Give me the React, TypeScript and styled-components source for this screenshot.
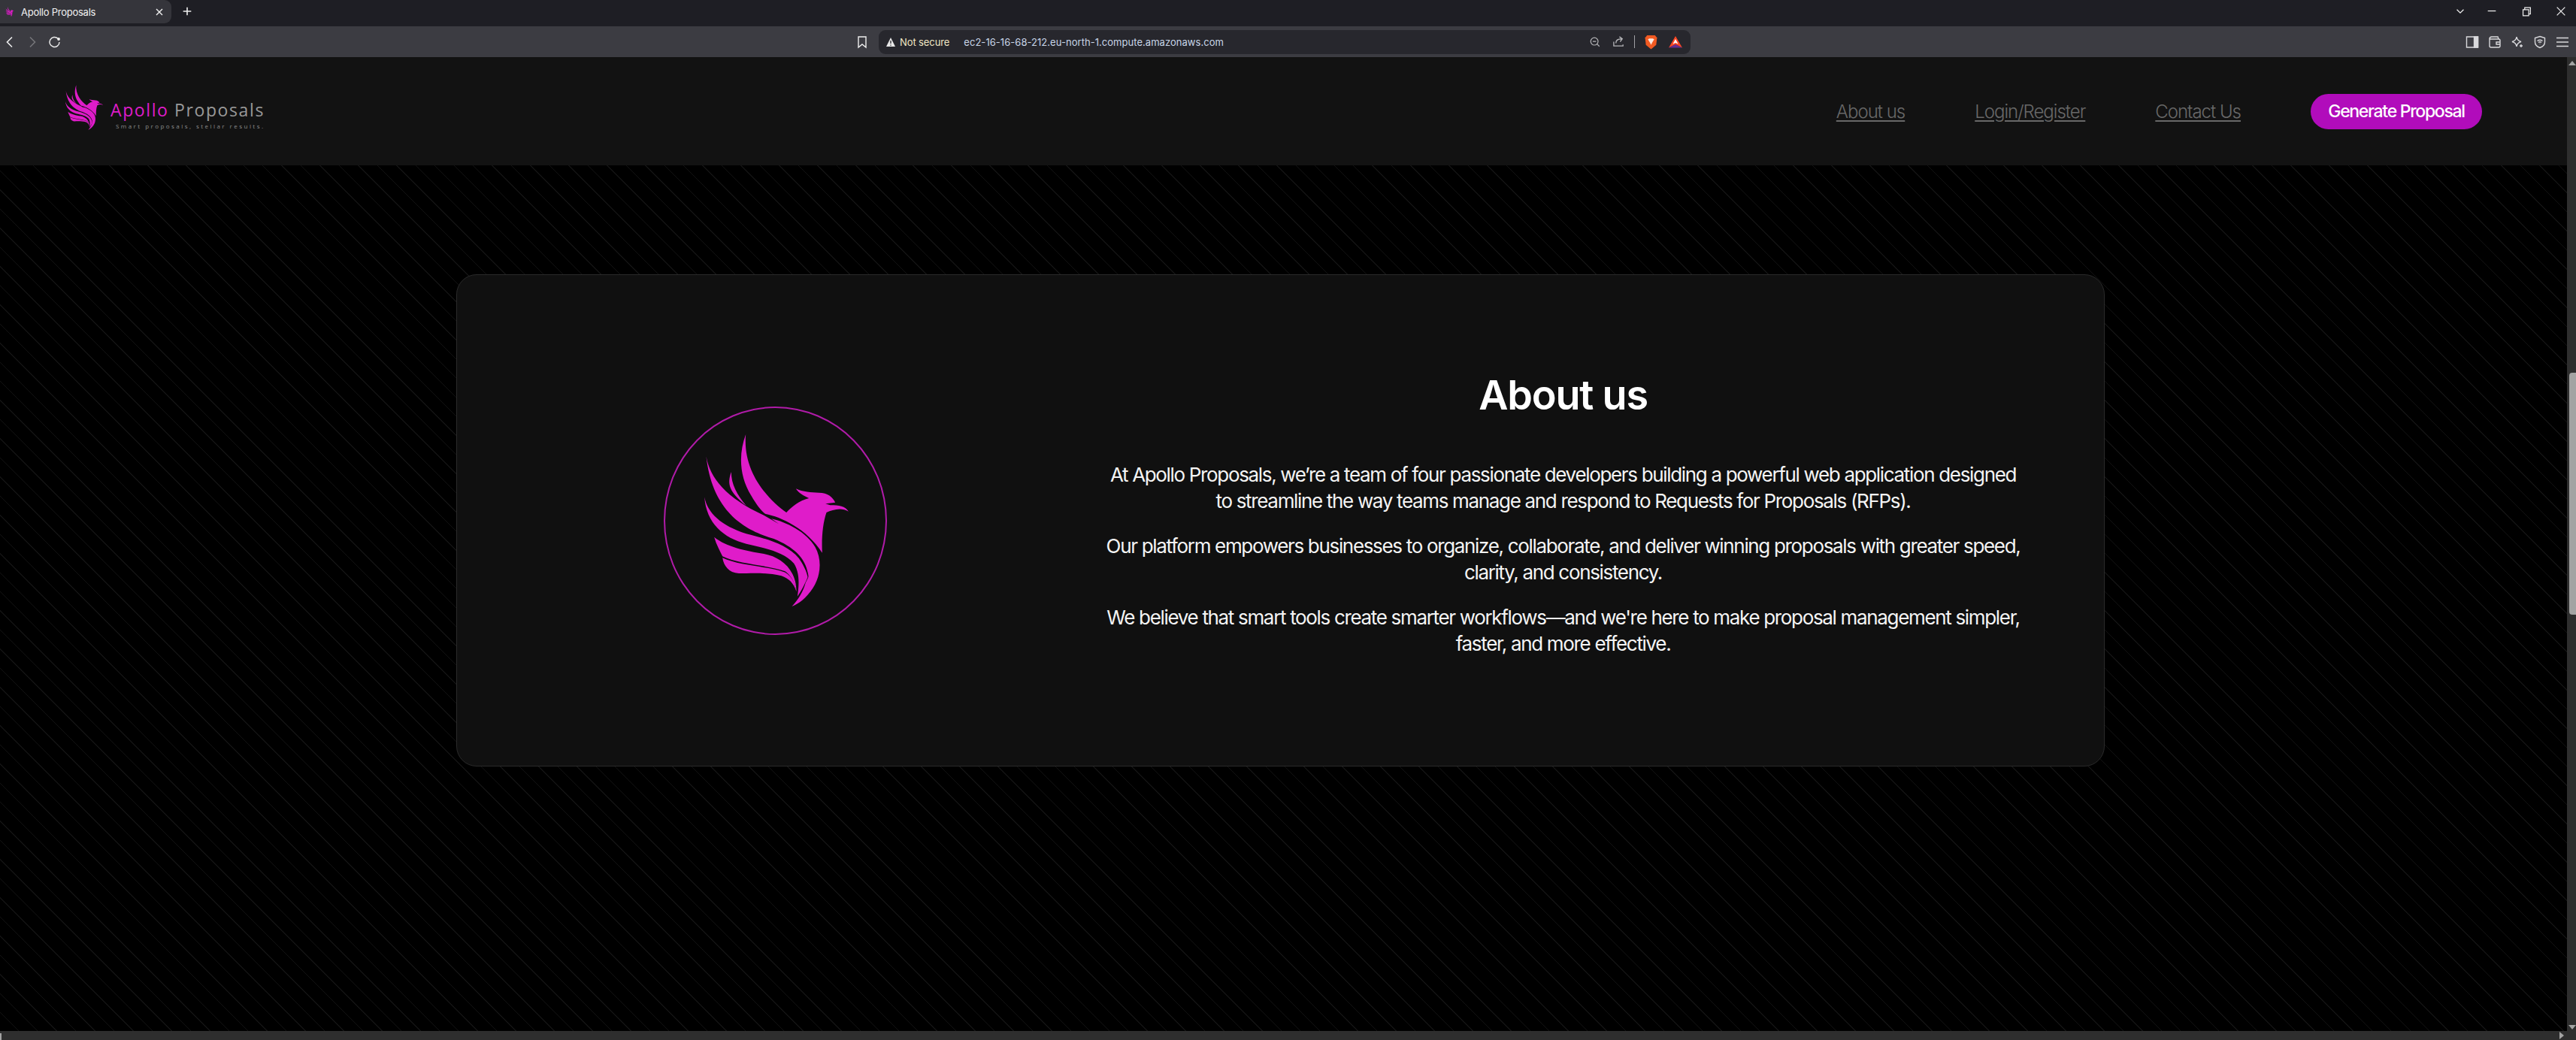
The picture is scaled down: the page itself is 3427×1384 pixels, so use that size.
import * as React from "react";
import styled, { createGlobalStyle } from "styled-components";

const GlobalStyle = createGlobalStyle`
  html, body {
    margin: 0;
    padding: 0;
    background: #000;
    overflow: hidden;
  }
`;

const Window = styled.div`
  width: 3427px;
  height: 1384px;
  display: flex;
  flex-direction: column;
  font-family: "Inter", "Liberation Sans", sans-serif;
  overflow: hidden;
`;

const TabBar = styled.div`
  height: 35px;
  flex: none;
  display: flex;
  background: #1e1e24;
`;

const Tab = styled.div`
  width: 228px;
  height: 31px;
  box-sizing: border-box;
  padding: 0 10px 0 7px;
  display: flex;
  align-items: center;
  gap: 9px;
  background: #35353b;
  border-bottom-right-radius: 9px;
  border-top-right-radius: 9px;
  color: #f2f2f2;
  font-size: 13px;
  letter-spacing: -0.25px;
`;

const TabTitle = styled.span`
  flex: 1;
`;

const NewTab = styled.div`
  margin: 7px 0 0 13px;
  width: 16px;
  height: 16px;
  color: #eee;
`;

const WindowControls = styled.div`
  margin-left: auto;
  padding: 7px 12px 0 0;
  display: flex;
  gap: 30px;
  color: #eee;

  svg:first-child {
    margin-right: -4px;
  }
`;

const Toolbar = styled.div`
  height: 41px;
  flex: none;
  box-sizing: border-box;
  padding: 0 9px 0 4px;
  display: flex;
  align-items: center;
  background: #3c3c42;
  color: #eee;
`;

const NavIcons = styled.div`
  display: flex;
  gap: 12px;
`;

const Bookmark = styled.div`
  margin-left: 1056px;
  width: 16px;
  height: 18px;
`;

const UrlBar = styled.div`
  margin-left: 15px;
  width: 1080px;
  height: 32px;
  box-sizing: border-box;
  padding: 0 11px 0 9px;
  display: flex;
  align-items: center;
  background: #27272d;
  border-radius: 9px;
  font-size: 13px;
`;

const NotSecure = styled.span`
  margin-left: 5px;
  color: #f0e6c4;
  letter-spacing: -0.1px;
`;

const UrlText = styled.span`
  margin-left: 19px;
  color: #c9d6e8;
  flex: 1;
  letter-spacing: 0.04px;
`;

const UrlIcons = styled.div`
  display: flex;
  align-items: center;
  gap: 15px;
  color: #b5b5b8;
`;

const UrlDivider = styled.div`
  width: 1px;
  height: 17px;
  background: #a0a0a4;
  margin: 0 -2px 0 -3px;
`;

const ToolIcons = styled.div`
  margin-left: auto;
  display: flex;
  align-items: center;
  gap: 12px;
  color: #d9d9dc;
`;

const Viewport = styled.div`
  flex: 1;
  min-height: 0;
  display: flex;
`;

const PageColumn = styled.div`
  flex: 1;
  min-width: 0;
  display: flex;
  flex-direction: column;
`;

const Page = styled.div`
  flex: 1;
  min-height: 0;
  background-color: #000;
  background-image: repeating-linear-gradient(
    45deg,
    transparent 0,
    transparent 17px,
    #121212 17px,
    #121212 18px
  );
`;

const Header = styled.header`
  height: 144px;
  box-sizing: border-box;
  padding: 0 113px 0 87px;
  display: flex;
  align-items: center;
  justify-content: space-between;
  background: #121212;
`;

const Brand = styled.div`
  display: flex;
  align-items: flex-start;
  gap: 10px;
  padding-bottom: 10px;
`;

const BrandText = styled.div`
  padding-top: 19px;
  font-family: "Open Sans", sans-serif;
`;

const BrandName = styled.div`
  font-size: 23px;
  line-height: 28px;
  letter-spacing: 1.6px;
  color: #999;
  white-space: pre;
`;

const BrandAccent = styled.span`
  color: #df1cc9;
`;

const Tagline = styled.div`
  margin: 3px 0 0 7px;
  font-size: 8px;
  line-height: 10px;
  letter-spacing: 2.45px;
  color: #8a8a8a;
`;

const Nav = styled.nav`
  display: flex;
  align-items: center;
  gap: 93px;
`;

const NavLink = styled.a`
  color: #686868;
  font-size: 24px;
  font-weight: 300;
  letter-spacing: -1px;
  text-decoration: underline;
  text-underline-offset: 3px;
  text-decoration-thickness: 2px;
`;

const CtaButton = styled.button`
  width: 228px;
  height: 47px;
  padding: 0;
  border: 0;
  border-radius: 24px;
  background: #b10cbb;
  color: #fff;
  font-family: inherit;
  font-size: 23px;
  font-weight: 500;
  letter-spacing: -1.3px;
`;

const Content = styled.main`
  padding: 145px 0 0 607px;
`;

const Card = styled.section`
  width: 2193px;
  height: 655px;
  box-sizing: border-box;
  display: grid;
  grid-template-columns: 846px 1225px;
  column-gap: 13px;
  align-items: center;
  background: #101010;
  border: 1px solid #2a2a2a;
  border-radius: 27px;
`;

const LogoColumn = styled.div`
  display: flex;
  justify-content: center;
`;

const LogoRing = styled.div`
  width: 297px;
  height: 304px;
  box-sizing: border-box;
  padding-left: 4px;
  display: flex;
  align-items: center;
  justify-content: center;
  border: 2px solid #b01ba8;
  border-radius: 50%;
`;

const TextColumn = styled.div`
  padding-bottom: 17px;
  text-align: center;
  color: #f4f4f4;
`;

const Title = styled.h1`
  margin: 0 0 57px;
  font-size: 54px;
  line-height: 64px;
  font-weight: 600;
  letter-spacing: -1.2px;
  color: #fff;
`;

const Paragraph = styled.p`
  margin: 0 0 26px;
  font-size: 26px;
  line-height: 34.5px;
  font-weight: 400;
  letter-spacing: -1.33px;

  &:last-child {
    margin-bottom: 0;
  }
`;

const VScroll = styled.div`
  width: 12px;
  flex: none;
  position: relative;
  background: #2e2e2e;
`;

const VThumb = styled.div`
  position: absolute;
  top: 420px;
  left: 3px;
  right: 0;
  height: 322px;
  border-radius: 4px 0 0 4px;
  background: #a3a3a3;
`;

const HScroll = styled.div`
  height: 12px;
  flex: none;
  position: relative;
  background: #2e2e2e;
`;

const HThumb = styled.div`
  position: absolute;
  left: 0;
  top: 3px;
  bottom: 0;
  width: 2px;
  background: #a3a3a3;
`;

interface IArrowProps {
  $dir: "up" | "down" | "right";
}

const Arrow = styled.div<IArrowProps>`
  position: absolute;
  width: 0;
  height: 0;
  ${props =>
    props.$dir === "up"
      ? "top: 5px; left: 2px; border-left: 5px solid transparent; border-right: 5px solid transparent; border-bottom: 6px solid #a3a3a3;"
      : props.$dir === "down"
      ? "bottom: 14px; left: 2px; border-left: 5px solid transparent; border-right: 5px solid transparent; border-top: 6px solid #a3a3a3;"
      : "top: 1px; right: 4px; border-top: 5px solid transparent; border-bottom: 5px solid transparent; border-left: 6px solid #a3a3a3;"}
`;

const PHOENIX = [
  "M398 175C370 250 370 340 420 420C440 455 460 480 475 492C540 505 640 550 703 648C700 590 705 530 720 487C745 475 780 465 808 483C795 462 770 458 735 458L716 452L755 447C745 425 725 408 690 408C660 408 625 405 598 392C610 412 630 420 650 430C610 440 580 465 560 487C480 430 385 320 398 175Z",
  "M340 325C322 375 332 405 400 460C362 415 340 375 340 325Z",
  "M240 263C255 350 320 430 470 498L530 533L500 512C560 525 640 565 675 625C705 680 695 745 665 790C640 828 610 852 582 862C608 835 628 800 636 770C642 755 647 750 648 742C640 670 590 625 510 592C400 560 265 490 240 263Z",
  "M233 425C245 490 300 540 400 572C470 590 560 610 610 670C630 700 640 720 645 745C635 770 620 800 604 822C612 770 612 725 590 690C550 645 480 630 400 612C310 590 240 530 233 425Z",
  "M272 585C320 625 400 640 470 652C540 665 600 715 600 803C595 765 575 735 555 722C480 695 370 695 305 662C295 640 280 615 272 585Z",
  "M305 668C370 700 480 700 555 726C585 745 597 775 600 803C590 770 570 750 540 740C480 725 420 730 370 730C330 728 310 700 305 668Z"
];

interface IPhoenixProps {
  width: number;
  height: number;
}

const Phoenix = ({ width, height }: IPhoenixProps) => (
  <svg width={width} height={height} viewBox="233 175 575 687" fill="#df1cc9">
    {PHOENIX.map((d, i) => (
      <path key={i} d={d} />
    ))}
  </svg>
);

const Stroke = ({ size = 18, children }: { size?: number; children: React.ReactNode }) => (
  <svg width={size} height={size} viewBox="0 0 18 18" fill="none" stroke="currentColor" strokeWidth="1.4">
    {children}
  </svg>
);

const App = () => (
  <Window>
    <GlobalStyle />
    <TabBar>
      <Tab>
        <Phoenix width={12} height={13} />
        <TabTitle>Apollo Proposals</TabTitle>
        <Stroke size={12}>
          <path d="M3 3l12 12M15 3L3 15" strokeWidth="2" />
        </Stroke>
      </Tab>
      <NewTab>
        <Stroke size={16}>
          <path d="M9 3v12M3 9h12" strokeWidth="1.8" />
        </Stroke>
      </NewTab>
      <WindowControls>
        <Stroke size={16}>
          <path d="M4 6.5l5 5 5-5" />
        </Stroke>
        <Stroke size={16}>
          <path d="M3 8.5h12" />
        </Stroke>
        <Stroke size={16}>
          <path d="M4 6.5h8.5v9H4zM6.5 6V3.5H15V13h-2.5" />
        </Stroke>
        <Stroke size={16}>
          <path d="M3 3l12 12M15 3L3 15" />
        </Stroke>
      </WindowControls>
    </TabBar>
    <Toolbar>
      <NavIcons>
        <Stroke>
          <path d="M12 2.5L5.5 9l6.5 6.5" strokeWidth="1.6" />
        </Stroke>
        <Stroke>
          <path d="M6 2.5L12.500 9 6 15.500" stroke="#76767a" strokeWidth="1.6" />
        </Stroke>
        <Stroke>
          <path d="M15 9a6.500 6.500 0 1 1-2-4.700" />
          <circle cx="14" cy="5" r="1.200" fill="currentColor" />
        </Stroke>
      </NavIcons>
      <Bookmark>
        <Stroke>
          <path d="M4 2h10v14l-5-4-5 4z" />
        </Stroke>
      </Bookmark>
      <UrlBar>
        <svg width="14" height="14" viewBox="0 0 14 14">
          <path d="M7 1l6 12H1z" fill="#e8e8e8" />
          <path d="M7 5v4M7 10.500v1.300" stroke="#27272d" strokeWidth="1.300" />
        </svg>
        <NotSecure>Not secure</NotSecure>
        <UrlText>ec2-16-16-68-212.eu-north-1.compute.amazonaws.com</UrlText>
        <UrlIcons>
          <Stroke size={16}>
            <circle cx="8" cy="8" r="5.500" />
            <path d="M5.500 8h5M12 12l3.500 3.500" />
          </Stroke>
          <Stroke size={17}>
            <path d="M2 9v6h13v-2M5 11c0-4 3-6 8-6M10 2l4 3-3 4" />
          </Stroke>
          <UrlDivider />
          <svg width="17" height="20" viewBox="0 0 16 19">
            <path d="M3 1h10l2.500 3-1 9L8 18.500 1.500 13l-1-9z" fill="#f15a22" />
            <path d="M4 6l2-1h4l2 1-2.500 4L8 13 6.500 10z" fill="#fbe9e0" />
          </svg>
          <svg width="18" height="16" viewBox="0 0 18 16">
            <path d="M9 0l9 15.500L9 11 0 15.500z" fill="#ff4724" />
            <path d="M9 4l3.500 6.500L9 9 5.500 10.500z" fill="#fff" />
            <path d="M0 15.500L9 11l9 4.500z" fill="#662d91" />
          </svg>
        </UrlIcons>
      </UrlBar>
      <ToolIcons>
        <Stroke>
          <path d="M1.500 2h15v14h-15z" />
          <path d="M11.500 2h5v14h-5z" fill="currentColor" />
        </Stroke>
        <Stroke>
          <path d="M2 5c0-2 1-3 3-3h8l1 3M2 5v9c0 1.500 1 2 2 2h10c1 0 2-.5 2-2V7c0-1-1-2-2-2zM11 9h5v3h-5z" />
        </Stroke>
        <Stroke>
          <path d="M8 2c.6 4 2 5.500 6 6.500-4 1-5.400 2.500-6 6.500-.6-4-2-5.500-6-6.500 4-1 5.400-2.500 6-6.500zM14 12v4M12 14h4" />
        </Stroke>
        <Stroke>
          <path d="M9 1.500l6.500 2V9c0 3.500-2.500 6-6.500 7.500C5 15 2.500 12.500 2.500 9V3.500zM5.500 7.500c2-1.500 5-1.500 7 0M7 9.500c1.200-.8 2.800-.8 4 0M9 11.500v.5" />
        </Stroke>
        <Stroke>
          <path d="M1 3.500h16M1 9h16M1 14.500h16" strokeWidth="1.600" />
        </Stroke>
      </ToolIcons>
    </Toolbar>
    <Viewport>
      <PageColumn>
        <Header>
          <Brand>
            <Phoenix width={50} height={60} />
            <BrandText>
              <BrandName>
                <BrandAccent>Apollo</BrandAccent> Proposals
              </BrandName>
              <Tagline>Smart proposals, stellar results.</Tagline>
            </BrandText>
          </Brand>
          <Nav>
            <NavLink>About us</NavLink>
            <NavLink>Login/Register</NavLink>
            <NavLink>Contact Us</NavLink>
            <CtaButton>Generate Proposal</CtaButton>
          </Nav>
        </Header>
        <Page>
          <Content>
            <Card>
              <LogoColumn>
                <LogoRing>
                  <Phoenix width={192} height={229} />
                </LogoRing>
              </LogoColumn>
              <TextColumn>
                <Title>About us</Title>
                <Paragraph>
                  At Apollo Proposals, we’re a team of four passionate developers building a powerful web application designed
                  to streamline the way teams manage and respond to Requests for Proposals (RFPs).
                </Paragraph>
                <Paragraph>
                  Our platform empowers businesses to organize, collaborate, and deliver winning proposals with greater speed,
                  clarity, and consistency.
                </Paragraph>
                <Paragraph>
                  We believe that smart tools create smarter workflows—and we're here to make proposal management simpler,
                  faster, and more effective.
                </Paragraph>
              </TextColumn>
            </Card>
          </Content>
        </Page>
        <HScroll>
          <HThumb />
          <Arrow $dir="right" />
        </HScroll>
      </PageColumn>
      <VScroll>
        <Arrow $dir="up" />
        <VThumb />
        <Arrow $dir="down" />
      </VScroll>
    </Viewport>
  </Window>
);

export default App;
